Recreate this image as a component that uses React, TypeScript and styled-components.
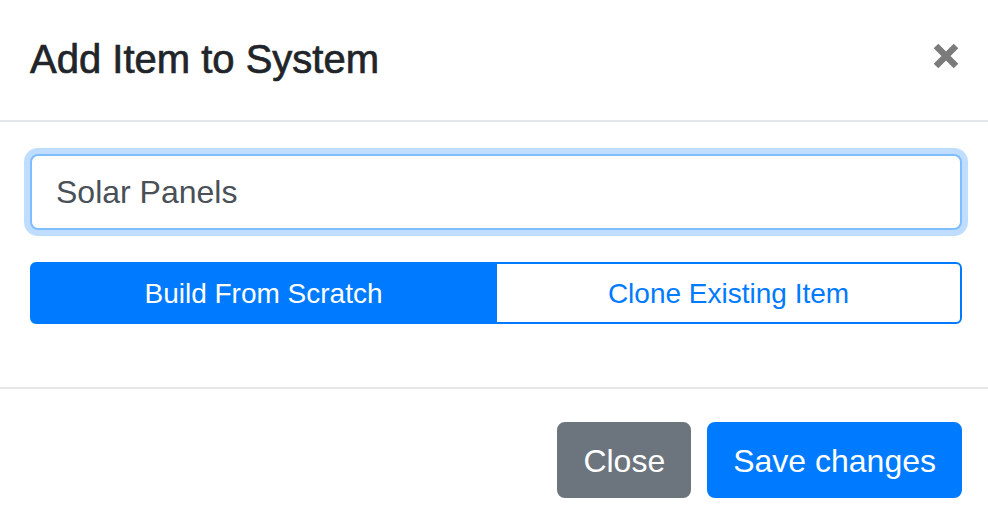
import React, { ReactElement } from "react";
import styled, { createGlobalStyle } from "styled-components";

const Global = createGlobalStyle`
	html, body {
		margin: 0;
		padding: 0;
		background: #ffffff;
		font-family: "Liberation Sans", Arial, sans-serif;
		color: #212529;
	}
	* {
		box-sizing: border-box;
	}
`;

const Modal = styled.div`
	width: 988px;
	height: 526px;
	overflow: hidden;
	background: #ffffff;
	display: flex;
	flex-direction: column;
`;

const Header = styled.div`
	height: 122px;
	flex-shrink: 0;
	padding: 0 28px 2px 30px;
	border-bottom: 2px solid #e4e6e9;
	display: flex;
	align-items: center;
	justify-content: space-between;
`;

const Title = styled.h5`
	margin: 0;
	font-size: 40px;
	font-weight: 500;
	line-height: 60px;
	color: #212529;
	-webkit-text-stroke: 0.7px #212529;
`;

const CloseX = styled.button`
	border: none;
	background: transparent;
	padding: 0;
	width: 28px;
	height: 28px;
	display: flex;
	align-items: center;
	justify-content: center;
	cursor: pointer;
	margin-top: -6px;
`;

const Body = styled.div`
	padding: 32px 26px 63px 30px;
	border-bottom: 2px solid #e4e6e9;
	display: flex;
	flex-direction: column;
	gap: 32px;
`;

const Input = styled.input`
	display: block;
	width: 100%;
	height: 76px;
	padding: 12px 24px;
	font-family: inherit;
	font-size: 32px;
	color: #495057;
	background: #ffffff;
	border: 2px solid #80bdff;
	border-radius: 8px;
	outline: none;
	box-shadow: 0 0 0 6px rgba(0, 123, 255, 0.25);
`;

const Group = styled.div`
	display: flex;
	height: 62px;
`;

const Toggle = styled.button<{ $active?: boolean; $side: "left" | "right" }>`
	flex: 1;
	height: 62px;
	font-family: inherit;
	font-size: 28px;
	line-height: 1.5;
	padding: 2px 16px 0;
	border: 2px solid #007bff;
	background: ${(p) => (p.$active ? "#007bff" : "#ffffff")};
	color: ${(p) => (p.$active ? "#ffffff" : "#007bff")};
	border-radius: ${(p) => (p.$side === "left" ? "6px 0 0 6px" : "0 6px 6px 0")};
	${(p) => (p.$side === "right" ? "margin-left: -2px;" : "")}
	cursor: pointer;
`;

const Footer = styled.div`
	padding: 33px 26px 0 30px;
	display: flex;
	justify-content: flex-end;
	gap: 16px;
`;

const Button = styled.button<{ $variant: "secondary" | "primary" }>`
	height: 76px;
	padding: 2px 24px 0;
	font-family: inherit;
	font-size: 32px;
	border: 2px solid ${(p) => (p.$variant === "primary" ? "#007bff" : "#6c757d")};
	background: ${(p) => (p.$variant === "primary" ? "#007bff" : "#6c757d")};
	color: #ffffff;
	border-radius: 8px;
	cursor: pointer;
`;

export default function App(): ReactElement {
	return (
		<>
			<Global />
			<Modal>
				<Header>
					<Title>Add Item to System</Title>
					<CloseX aria-label="Close">
						<svg width="26" height="26" viewBox="0 0 26 26">
							<path d="M3 3 L23 23 M23 3 L3 23" stroke="#7b7b7b" strokeWidth="6.5" />
						</svg>
					</CloseX>
				</Header>
				<Body>
					<Input defaultValue="Solar Panels" />
					<Group>
						<Toggle $active $side="left">Build From Scratch</Toggle>
						<Toggle $side="right">Clone Existing Item</Toggle>
					</Group>
				</Body>
				<Footer>
					<Button $variant="secondary">Close</Button>
					<Button $variant="primary">Save changes</Button>
				</Footer>
			</Modal>
		</>
	);
}
